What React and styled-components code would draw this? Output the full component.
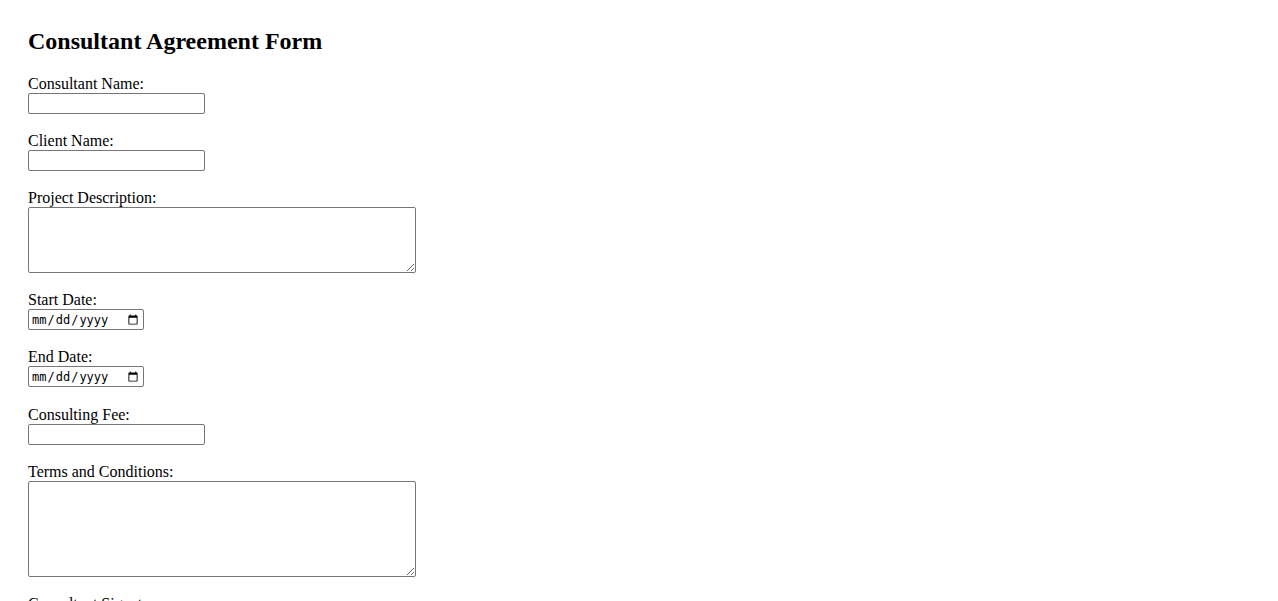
import React, { useState } from 'react';
import styled, { createGlobalStyle } from 'styled-components';

const GlobalStyle = createGlobalStyle`
  body {
    margin: 8px;
    background: #fff;
    color: #000;
    font-family: 'Liberation Serif', 'Times New Roman', serif;
    font-size: 16px;
  }
`;

const FormContainer = styled.form`
  display: flex;
  flex-direction: column;
  align-items: flex-start;
  padding: 20px;
`;

const Title = styled.h2`
  margin: 0 0 20px;
  font-size: 24px;
  font-weight: bold;
  line-height: 27px;
`;

const Field = styled.div`
  display: flex;
  flex-direction: column;
  align-items: flex-start;
  margin-bottom: ${(p) => p.$mb || 18}px;
`;

const Label = styled.label`
  display: block;
  line-height: 18px;
`;

const TextInput = styled.input`
  box-sizing: border-box;
  width: 177px;
  height: 21px;
  padding: 1px 2px;
  border: 1px solid #767676;
  border-radius: 2px;
  font-family: 'Liberation Sans', Arial, sans-serif;
  font-size: 13.33px;
`;

const DateInput = styled.input`
  box-sizing: border-box;
  width: 116px;
  height: 21px;
  padding: 1px 2px;
  border: 1px solid #767676;
  border-radius: 2px;
  font-family: 'DejaVu Sans Mono', 'Liberation Mono', monospace;
  font-size: 12px;
`;

const TextArea = styled.textarea`
  box-sizing: border-box;
  width: 388px;
  height: ${(p) => p.$h}px;
  padding: 2px;
  border: 1px solid #767676;
  border-radius: 2px;
  font-family: 'Liberation Mono', monospace;
  font-size: 13.33px;
`;

const SubmitButton = styled.button`
  font-family: 'Liberation Sans', Arial, sans-serif;
  font-size: 13.33px;
`;

const App = () => {
  const [form, setForm] = useState({
    consultantName: '',
    clientName: '',
    description: '',
    startDate: '',
    endDate: '',
    fee: '',
    terms: '',
    consultantSignature: '',
    clientSignature: '',
  });

  const update = (key) => (e) => setForm({ ...form, [key]: e.target.value });

  return (
    <>
      <GlobalStyle />
      <FormContainer onSubmit={(e) => e.preventDefault()}>
        <Title>Consultant Agreement Form</Title>

        <Field>
          <Label htmlFor="consultantName">Consultant Name:</Label>
          <TextInput id="consultantName" type="text" value={form.consultantName} onChange={update('consultantName')} />
        </Field>

        <Field>
          <Label htmlFor="clientName">Client Name:</Label>
          <TextInput id="clientName" type="text" value={form.clientName} onChange={update('clientName')} />
        </Field>

        <Field>
          <Label htmlFor="description">Project Description:</Label>
          <TextArea id="description" $h={66} value={form.description} onChange={update('description')} />
        </Field>

        <Field>
          <Label htmlFor="startDate">Start Date:</Label>
          <DateInput id="startDate" type="date" value={form.startDate} onChange={update('startDate')} />
        </Field>

        <Field $mb={19}>
          <Label htmlFor="endDate">End Date:</Label>
          <DateInput id="endDate" type="date" value={form.endDate} onChange={update('endDate')} />
        </Field>

        <Field>
          <Label htmlFor="fee">Consulting Fee:</Label>
          <TextInput id="fee" type="text" value={form.fee} onChange={update('fee')} />
        </Field>

        <Field>
          <Label htmlFor="terms">Terms and Conditions:</Label>
          <TextArea id="terms" $h={96} value={form.terms} onChange={update('terms')} />
        </Field>

        <Field>
          <Label htmlFor="consultantSignature">Consultant Signature:</Label>
          <TextInput id="consultantSignature" type="text" value={form.consultantSignature} onChange={update('consultantSignature')} />
        </Field>

        <Field>
          <Label htmlFor="clientSignature">Client Signature:</Label>
          <TextInput id="clientSignature" type="text" value={form.clientSignature} onChange={update('clientSignature')} />
        </Field>

        <SubmitButton type="submit">Submit</SubmitButton>
      </FormContainer>
    </>
  );
};

export default App;
